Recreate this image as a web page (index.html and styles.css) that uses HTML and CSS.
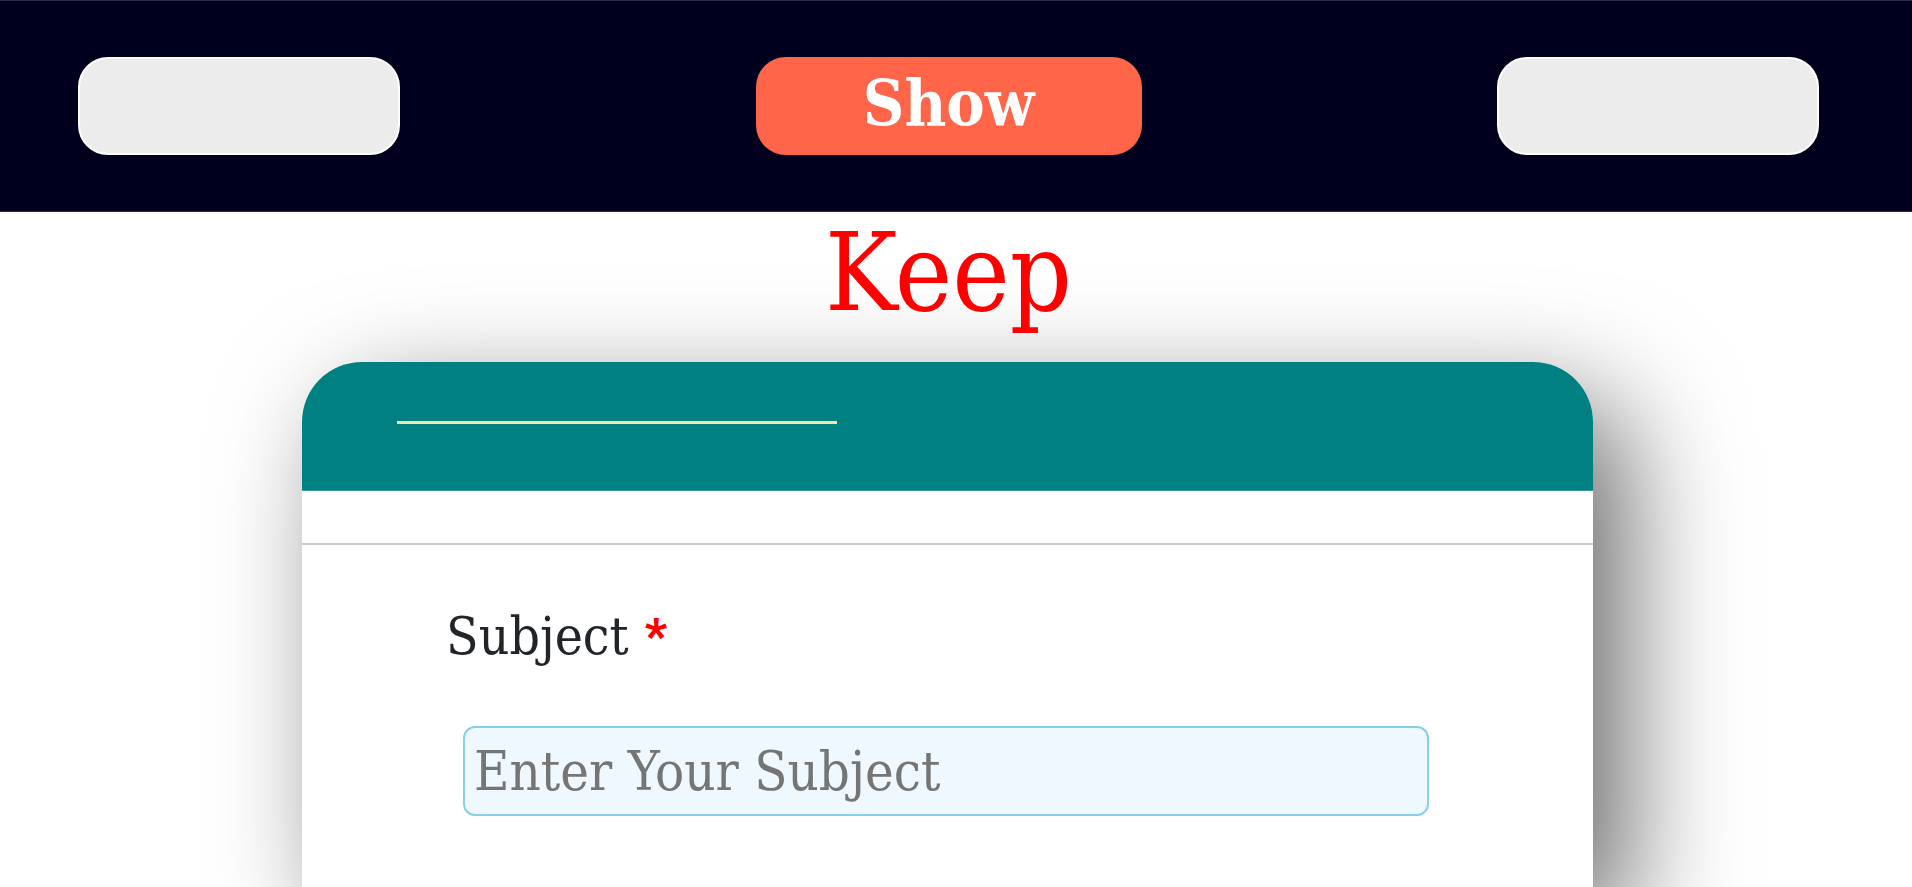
FILE: index.html
```html
<!DOCTYPE html>
<html lang="en">
<head>
<meta charset="utf-8">
<title>Keep</title>
<link rel="stylesheet" href="styles.css">
</head>
<body>
<nav class="topbar">
  <a class="pill pill-light" href="#"></a>
  <a class="pill pill-show" href="#">Show</a>
  <a class="pill pill-light" href="#"></a>
</nav>
<main class="page">
  <h1 class="title">Keep</h1>
  <section class="card">
    <header class="card-head"><div class="head-rule"></div></header>
    <div class="card-band"></div>
    <form class="card-body">
      <label class="field-label" for="subject">Subject<span class="req">*</span></label>
      <input class="field-input" id="subject" type="text" placeholder="Enter Your Subject">
    </form>
  </section>
</main>
</body>
</html>
```
FILE: styles.css
```css
html, body {
  margin: 0;
  height: 100%;
  overflow: hidden;
  background: #fff;
  font-family: "DejaVu Serif", "Liberation Serif", serif;
}

.topbar {
  display: flex;
  justify-content: space-between;
  align-items: flex-start;
  box-sizing: border-box;
  height: 212px;
  padding: 56px 93px 0 78px;
  background: #00001e;
  border-top: 1px solid #2c2c46;
  border-bottom: 1px solid #2c2c46;
}

.pill {
  box-sizing: border-box;
  width: 322px;
  height: 98px;
  border-radius: 30px;
  text-decoration: none;
}

.pill-light {
  background: #ececec;
  border: 2px solid #fff;
}

.pill-show {
  width: 386px;
  padding-bottom: 6px;
  background: #ff6549;
  color: #fff;
  font-weight: bold;
  font-stretch: condensed;
  font-size: 64px;
  line-height: 1;
  display: flex;
  align-items: center;
  justify-content: center;
}

.page {
  width: 1897px;
}

.title {
  margin: 0 0 34px;
  padding-top: 6px;
  text-align: center;
  color: #ff0000;
  font-weight: normal;
  font-stretch: condensed;
  font-size: 108px;
  line-height: 110px;
}

.card {
  margin-left: 302px;
  width: 1291px;
  height: 526px;
  background: #fff;
  border-radius: 60px 60px 0 0;
  box-shadow: 34px 40px 114px rgba(0, 0, 0, 0.58);
}

.card-head {
  height: 129px;
  box-sizing: border-box;
  padding: 59px 0 0 95px;
  background: #008080;
  border-radius: 60px 60px 0 0;
  border-bottom: 1px solid #3a9c9c;
}

.head-rule {
  width: 440px;
  height: 3px;
  background: #eee8aa;
}

.card-band {
  height: 52px;
  border-bottom: 2px solid #cccccc;
}

.card-body {
  display: flex;
  flex-direction: column;
  align-items: flex-start;
  padding: 61px 0 0 144px;
}

.field-label {
  display: flex;
  align-items: flex-start;
  font-size: 53px;
  font-stretch: condensed;
  color: #212529;
  line-height: 60px;
}

.req {
  color: #ff0000;
  font-family: Roboto, "Liberation Sans", sans-serif;
  font-weight: 900;
  font-size: 48px;
  line-height: 48px;
  margin: 6px 0 0 16px;
}

.field-input {
  box-sizing: border-box;
  margin: 60px 0 0 17px;
  width: 966px;
  height: 90px;
  padding: 0 9px;
  background: #f0f8ff;
  border: 2px solid #87ceeb;
  border-radius: 12px;
  font-family: "DejaVu Serif", "Liberation Serif", serif;
  font-stretch: condensed;
  font-size: 54px;
  color: #333;
  outline: none;
}

.field-input::placeholder {
  color: #757575;
}
```
